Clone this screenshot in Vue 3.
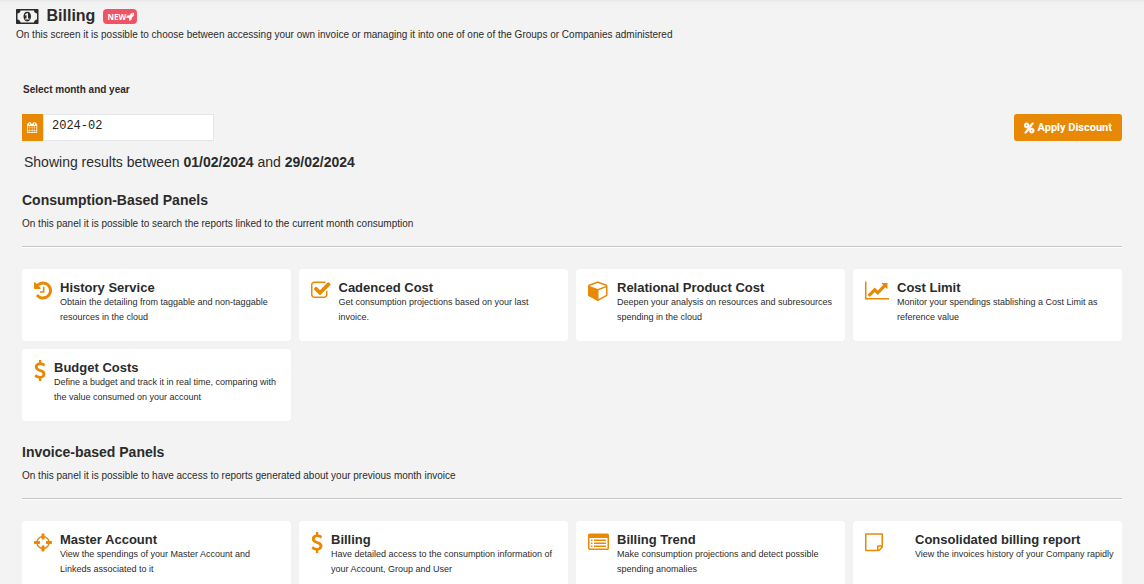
<script setup>
import { ref } from 'vue'

const month = ref('2024-02')

const icons = {
  money: {
    box: '0 0 1920 1792',
    d: 'M768 1152h384v-96h-128v-448h-114l-148 137 77 80q42-37 55-57h2v288h-128v96zm512-256q0 70-21 142t-59.5 134-101.5 101-138 39-138-39-101.5-101-59.5-134-21-142 21-142 59.5-134 101.5-101 138-39 138 39 101.5 101 59.5 134 21 142zm512 256v-512q-106 0-181-75t-75-181h-1152q0 106-75 181t-181 75v512q106 0 181 75t75 181h1152q0-106 75-181t181-75zm128-832v1152q0 26-19 45t-45 19h-1792q-26 0-45-19t-19-45v-1152q0-26 19-45t45-19h1792q26 0 45 19t19 45z',
  },
  rocket: {
    box: '0 0 1664 1792',
    d: 'M1440 448q0-40-28-68t-68-28-68 28-28 68 28 68 68 28 68-28 28-68zm224-288q0 249-75.5 430.5t-253.5 360.5q-81 80-195 176l-20 379q-2 16-16 26l-384 224q-7 4-16 4-12 0-23-9l-64-64q-13-14-8-32l85-276-281-281-276 85q-3 1-9 1-14 0-23-9l-64-64q-17-19-5-39l224-384q10-14 26-16l379-20q96-114 176-195 188-187 358-258t431-71q14 0 24 9.5t10 22.5z',
  },
  calendar: {
    box: '64 0 1664 1792',
    d: 'M192 1664h288v-288h-288v288zm352 0h320v-288h-320v288zm-352-352h288v-320h-288v320zm352 0h320v-320h-320v320zm-352-384h288v-288h-288v288zm736 736h320v-288h-320v288zm-384-736h320v-288h-320v288zm768 736h288v-288h-288v288zm-384-352h320v-320h-320v320zm-352-864v-288q0-13-9.5-22.5t-22.5-9.5h-64q-13 0-22.5 9.5t-9.5 22.5v288q0 13 9.5 22.5t22.5 9.5h64q13 0 22.5-9.5t9.5-22.5zm736 864h288v-320h-288v320zm-384-384h320v-288h-320v288zm384 0h288v-288h-288v288zm32-480v-288q0-13-9.5-22.5t-22.5-9.5h-64q-13 0-22.5 9.5t-9.5 22.5v288q0 13 9.5 22.5t22.5 9.5h64q13 0 22.5-9.5t9.5-22.5zm384-64v1280q0 52-38 90t-90 38h-1408q-52 0-90-38t-38-90v-1280q0-52 38-90t90-38h128v-96q0-66 47-113t113-47h64q66 0 113 47t47 113v96h384v-96q0-66 47-113t113-47h64q66 0 113 47t47 113v96h128q52 0 90 38t38 90z',
  },
  percent: {
    box: '0 0 1536 1792',
    d: 'M1280 1280q0-52-38-90t-90-38-90 38-38 90 38 90 90 38 90-38 38-90zm-768-768q0-52-38-90t-90-38-90 38-38 90 38 90 90 38 90-38 38-90zm1024 768q0 159-112.5 271.5t-271.5 112.5-271.5-112.5-112.5-271.5 112.5-271.5 271.5-112.5 271.5 112.5 112.5 271.5zm-96-1088q0 20-13 38l-1056 1408q-19 26-51 26h-160q-26 0-45-19t-19-45q0-20 13-38l1056-1408q19-26 51-26h160q26 0 45 19t19 45zm-672 320q0 159-112.5 271.5t-271.5 112.5-271.5-112.5-112.5-271.5 112.5-271.5 271.5-112.5 271.5 112.5 112.5 271.5z',
  },
  history: {
    box: '128 0 1536 1792',
    d: 'M1664 896q0 156-61 298t-164 245-245 164-298 61q-172 0-327-72.5t-264-204.5q-7-10-6.5-22.5t8.5-20.5l137-138q10-9 25-9 16 2 23 12 73 95 179 147t225 52q104 0 198.5-40.5t163.5-109.5 109.5-163.5 40.5-198.5-40.5-198.5-109.5-163.5-163.5-109.5-198.5-40.5q-98 0-188 35.5t-160 101.5l137 138q31 30 14 69-17 40-59 40h-448q-26 0-45-19t-19-45v-448q0-42 40-59 39-17 69 14l130 129q107-101 244.5-156.5t284.5-55.5q156 0 298 61t245 164 164 245 61 298zm-640-288v448q0 14-9 23t-23 9h-320q-14 0-23-9t-9-23v-64q0-14 9-23t23-9h224v-352q0-14 9-23t23-9h64q14 0 23 9t9 23z',
  },
  check: {
    box: '64 0 1664 1792',
    d: 'M1472 930v318q0 119-84.5 203.5t-203.5 84.5h-832q-119 0-203.5-84.5t-84.5-203.5v-832q0-119 84.5-203.5t203.5-84.5h832q63 0 117 25 15 7 18 23 3 17-9 29l-49 49q-10 10-23 10-3 0-9-2-23-6-45-6h-832q-66 0-113 47t-47 113v832q0 66 47 113t113 47h832q66 0 113-47t47-113v-254q0-13 9-22l64-64q10-10 23-10 6 0 12 3 20 8 20 29zm231-489l-814 814q-24 24-57 24t-57-24l-430-430q-24-24-24-57t24-57l110-110q24-24 57-24t57 24l263 263 647-647q24-24 57-24t57 24l110 110q24 24 24 57t-24 57z',
  },
  cube: {
    box: '0 0 1792 1792',
    d: 'M896 1629l640-349v-636l-640 233v752zm-64-865l698-254-698-254-698 254zm832-252v768q0 35-18 65t-49 47l-704 384q-28 16-61 16t-61-16l-704-384q-31-17-49-47t-18-65v-768q0-40 23-73t61-47l704-256q22-8 44-8t44 8l704 256q38 14 61 47t23 73z',
  },
  chart: {
    box: '0 0 2048 1792',
    d: 'M2048 1536v128h-2048v-1536h128v1408h1920zm-128-1248v435q0 21-19.5 29.5t-35.5-7.5l-121-121-633 633q-10 10-23 10t-23-10l-233-233-416 416-192-192 585-585q10-10 23-10t23 10l233 233 464-464-121-121q-16-16-7.5-35.5t29.5-19.5h435q14 0 23 9t9 23z',
  },
  dollar: {
    box: '384 0 1024 1792',
    d: 'M1362 1185q0 153-99.5 263.5t-258.5 136.5v175q0 14-9 23t-23 9h-135q-13 0-22.5-9.5t-9.5-22.5v-175q-66-9-127.5-31t-101.5-44.5-74-48-46.5-37.5-17.5-18q-17-21-2-41l103-135q7-10 23-12 15-2 24 9l2 2q113 99 243 125 37 8 74 8 81 0 142.5-43t61.5-122q0-28-15-53t-33.5-42-58.5-37.5-66-32-80-32.5q-39-16-61.5-25t-61.5-26.5-62.5-31-56.5-35.5-53.5-42.5-43.5-49-35.5-58-21-66.5-8.5-78q0-138 98-242t255-134v-180q0-13 9.5-22.5t22.5-9.5h135q14 0 23 9t9 23v176q57 6 110.5 23t87 33.5 63.5 37.5 39 29 15 14q17 18 5 38l-81 146q-8 15-23 16-14 3-27-7-3-3-14.5-12t-39-26.5-58.5-32-74.5-26-85.5-11.5q-95 0-155 43t-60 111q0 26 8.5 48t29.5 41.5 39.5 33 56 31 60.5 27 70 27.5q53 20 81 31.5t76 35 75.5 42.5 62 50 53 63.5 31.5 76.5 13 94z',
  },
  crosshairs: {
    box: '128 0 1536 1792',
    d: 'M1325 1024h-109q-26 0-45-19t-19-45v-128q0-26 19-45t45-19h109q-32-108-112.5-188.5t-188.5-112.5v109q0 26-19 45t-45 19h-128q-26 0-45-19t-19-45v-109q-108 32-188.5 112.5t-112.5 188.5h109q26 0 45 19t19 45v128q0 26-19 45t-45 19h-109q32 108 112.5 188.5t188.5 112.5v-109q0-26 19-45t45-19h128q26 0 45 19t19 45v109q108-32 188.5-112.5t112.5-188.5zm339-192v128q0 26-19 45t-45 19h-143q-37 161-154.5 278.5t-278.5 154.5v143q0 26-19 45t-45 19h-128q-26 0-45-19t-19-45v-143q-161-37-278.5-154.5t-154.5-278.5h-143q-26 0-45-19t-19-45v-128q0-26 19-45t45-19h143q37-161 154.5-278.5t278.5-154.5v-143q0-26 19-45t45-19h128q26 0 45 19t19 45v143q161 37 278.5 154.5t154.5 278.5h143q26 0 45 19t19 45z',
  },
  list: {
    box: '0 0 1792 1792',
    d: 'M384 1184v64q0 13-9.5 22.5t-22.5 9.5h-64q-13 0-22.5-9.5t-9.5-22.5v-64q0-13 9.5-22.5t22.5-9.5h64q13 0 22.5 9.5t9.5 22.5zm0-256v64q0 13-9.5 22.5t-22.5 9.5h-64q-13 0-22.5-9.5t-9.5-22.5v-64q0-13 9.5-22.5t22.5-9.5h64q13 0 22.5 9.5t9.5 22.5zm0-256v64q0 13-9.5 22.5t-22.5 9.5h-64q-13 0-22.5-9.5t-9.5-22.5v-64q0-13 9.5-22.5t22.5-9.5h64q13 0 22.5 9.5t9.5 22.5zm1152 512v64q0 13-9.5 22.5t-22.5 9.5h-960q-13 0-22.5-9.5t-9.5-22.5v-64q0-13 9.5-22.5t22.5-9.5h960q13 0 22.5 9.5t9.5 22.5zm0-256v64q0 13-9.5 22.5t-22.5 9.5h-960q-13 0-22.5-9.5t-9.5-22.5v-64q0-13 9.5-22.5t22.5-9.5h960q13 0 22.5 9.5t9.5 22.5zm0-256v64q0 13-9.5 22.5t-22.5 9.5h-960q-13 0-22.5-9.5t-9.5-22.5v-64q0-13 9.5-22.5t22.5-9.5h960q13 0 22.5 9.5t9.5 22.5zm128 704v-832q0-13-9.5-22.5t-22.5-9.5h-1472q-13 0-22.5 9.5t-9.5 22.5v832q0 13 9.5 22.5t22.5 9.5h1472q13 0 22.5-9.5t9.5-22.5zm128-1088v1088q0 66-47 113t-113 47h-1472q-66 0-113-47t-47-113v-1088q0-66 47-113t113-47h1472q66 0 113 47t47 113z',
  },
  note: {
    box: '0 0 1536 1792',
    d: 'M1400 1256h-248v248q29-10 41-22l185-185q12-12 22-41zm-280-128h288v-896h-1280v1280h896v-288q0-40 28-68t68-28zm416-928v1024q0 40-20 88t-48 76l-184 184q-28 28-76 48t-88 20h-1024q-40 0-68-28t-28-68v-1344q0-40 28-68t68-28h1344q40 0 68 28t28 68z',
  },
}

const sections = [
  {
    title: 'Consumption-Based Panels',
    text: 'On this panel it is possible to search the reports linked to the current month consumption',
    cards: [
      { icon: 'history', title: 'History Service', text: 'Obtain the detailing from taggable and non-taggable resources in the cloud' },
      { icon: 'check', title: 'Cadenced Cost', text: 'Get consumption projections based on your last invoice.' },
      { icon: 'cube', title: 'Relational Product Cost', text: 'Deepen your analysis on resources and subresources spending in the cloud' },
      { icon: 'chart', title: 'Cost Limit', text: 'Monitor your spendings stablishing a Cost Limit as reference value' },
      { icon: 'dollar', title: 'Budget Costs', text: 'Define a budget and track it in real time, comparing with the value consumed on your account' },
    ],
  },
  {
    title: 'Invoice-based Panels',
    text: 'On this panel it is possible to have access to reports generated about your previous month invoice',
    cards: [
      { icon: 'crosshairs', title: 'Master Account', text: 'View the spendings of your Master Account and Linkeds associated to it' },
      { icon: 'dollar', title: 'Billing', text: 'Have detailed access to the consumption information of your Account, Group and User' },
      { icon: 'list', title: 'Billing Trend', text: 'Make consumption projections and detect possible spending anomalies' },
      { icon: 'note', title: 'Consolidated billing report', text: 'View the invoices history of your Company rapidly', spaced: true },
    ],
  },
]
</script>

<template>
  <main class="page">
    <header class="head">
      <h1>
        <svg class="head-icon" :viewBox="icons.money.box" aria-hidden="true"><path :d="icons.money.d" /></svg>
        <span>Billing</span>
        <span class="badge">NEW<svg :viewBox="icons.rocket.box" aria-hidden="true"><path :d="icons.rocket.d" /></svg></span>
      </h1>
      <p>On this screen it is possible to choose between accessing your own invoice or managing it into one of one of the Groups or Companies administered</p>
    </header>

    <div class="content">
      <label class="label" for="month">Select month and year</label>
      <div class="toolbar">
        <div class="picker">
          <span class="addon"><svg :viewBox="icons.calendar.box" aria-hidden="true"><path :d="icons.calendar.d" /></svg></span>
          <input id="month" v-model="month" type="text" />
        </div>
        <button class="discount" type="button">
          <svg :viewBox="icons.percent.box" aria-hidden="true"><path :d="icons.percent.d" /></svg>
          <span>Apply Discount</span>
        </button>
      </div>
      <p class="range">Showing results between <b>01/02/2024</b> and <b>29/02/2024</b></p>

      <section v-for="section in sections" :key="section.title" class="section">
        <h2>{{ section.title }}</h2>
        <p class="intro">{{ section.text }}</p>
        <hr />
        <div class="cards">
          <a v-for="card in section.cards" :key="card.title" class="card" :class="{ spaced: card.spaced }" href="#">
            <svg class="card-icon" :viewBox="icons[card.icon].box" aria-hidden="true"><path :d="icons[card.icon].d" /></svg>
            <div class="card-body">
              <h3>{{ card.title }}</h3>
              <p>{{ card.text }}</p>
            </div>
          </a>
        </div>
      </section>
    </div>
  </main>
</template>

<style>
html {
  background: #f3f3f3;
}
html,
body {
  height: 100%;
  overflow: hidden;
}
</style>

<style scoped>
.page {
  color: #2b2b2b;
  font-family: "Liberation Sans", Arial, sans-serif;
  font-size: 10px;
  background: #f3f3f3;
  box-shadow: inset 0 3px 3px -2px #e4e4e4;
}
h1, h2, h3, p {
  margin: 0;
}
svg {
  fill: currentColor;
  flex: none;
  display: block;
}
.head {
  padding: 5px 16px 0;
}
h1 {
  display: flex;
  align-items: center;
  gap: 8px;
  font-size: 16px;
  line-height: 22px;
}
.head-icon {
  height: 21px;
}
.badge {
  display: flex;
  align-items: center;
  height: 15px;
  padding: 0 3px 0 4px;
  border-radius: 4px;
  background: #ef5464;
  color: #fff;
  font: bold 8px/15px "Open Sans", sans-serif;
}
.badge svg {
  height: 9px;
}
.head p {
  line-height: 15px;
}
.content {
  padding: 40px 22px 0;
}
.label {
  display: block;
  padding-left: 1px;
  font-weight: bold;
  line-height: 15px;
}
.toolbar {
  display: flex;
  justify-content: space-between;
  margin-top: 17px;
}
.picker {
  display: flex;
  width: 192px;
  height: 27px;
}
.addon {
  display: flex;
  align-items: center;
  justify-content: center;
  width: 21px;
  background: #e88906;
  color: #fff;
}
.addon svg {
  height: 11px;
}
.picker input {
  flex: 1;
  min-width: 0;
  box-sizing: border-box;
  border: 1px solid #e5e6e7;
  padding: 0 8px 4px;
  background: #fff;
  color: #222;
  font: 12px "Liberation Mono", monospace;
}
.discount {
  display: flex;
  align-items: center;
  gap: 3px;
  height: 27px;
  padding: 0 10px;
  border: 0;
  border-radius: 3px;
  background: #e88906;
  color: #fff;
  font: bold 11px Roboto, Arial, sans-serif;
}
.discount svg {
  height: 12px;
  stroke: currentColor;
  stroke-width: 80;
}
.range {
  margin-top: 11px;
  padding-left: 2px;
  font-size: 14px;
  line-height: 20px;
}
.section {
  padding-top: 20px;
}
.section + .section {
  padding-top: 23px;
}
h2 {
  font-size: 14px;
  line-height: 16px;
}
.intro {
  margin-top: 8px;
  line-height: 15px;
}
hr {
  height: 1px;
  margin: 15px 0 22px;
  border: 0;
  background: #c4c4c4;
  box-shadow: 0 1px #fff;
}
.cards {
  display: grid;
  grid-template-columns: repeat(4, minmax(0, 1fr));
  gap: 8px;
}
.card {
  display: flex;
  align-items: flex-start;
  gap: 8px;
  min-height: 72px;
  box-sizing: border-box;
  padding: 11px 12px;
  border-radius: 4px;
  background: #fff;
  color: inherit;
  text-decoration: none;
}
.card.spaced {
  gap: 32px;
  padding-right: 4px;
}
.card-icon {
  height: 21px;
  color: #e88906;
}
h3 {
  font-size: 13px;
  line-height: 15px;
}
.card-body p {
  font-size: 9px;
  line-height: 15px;
}
</style>
